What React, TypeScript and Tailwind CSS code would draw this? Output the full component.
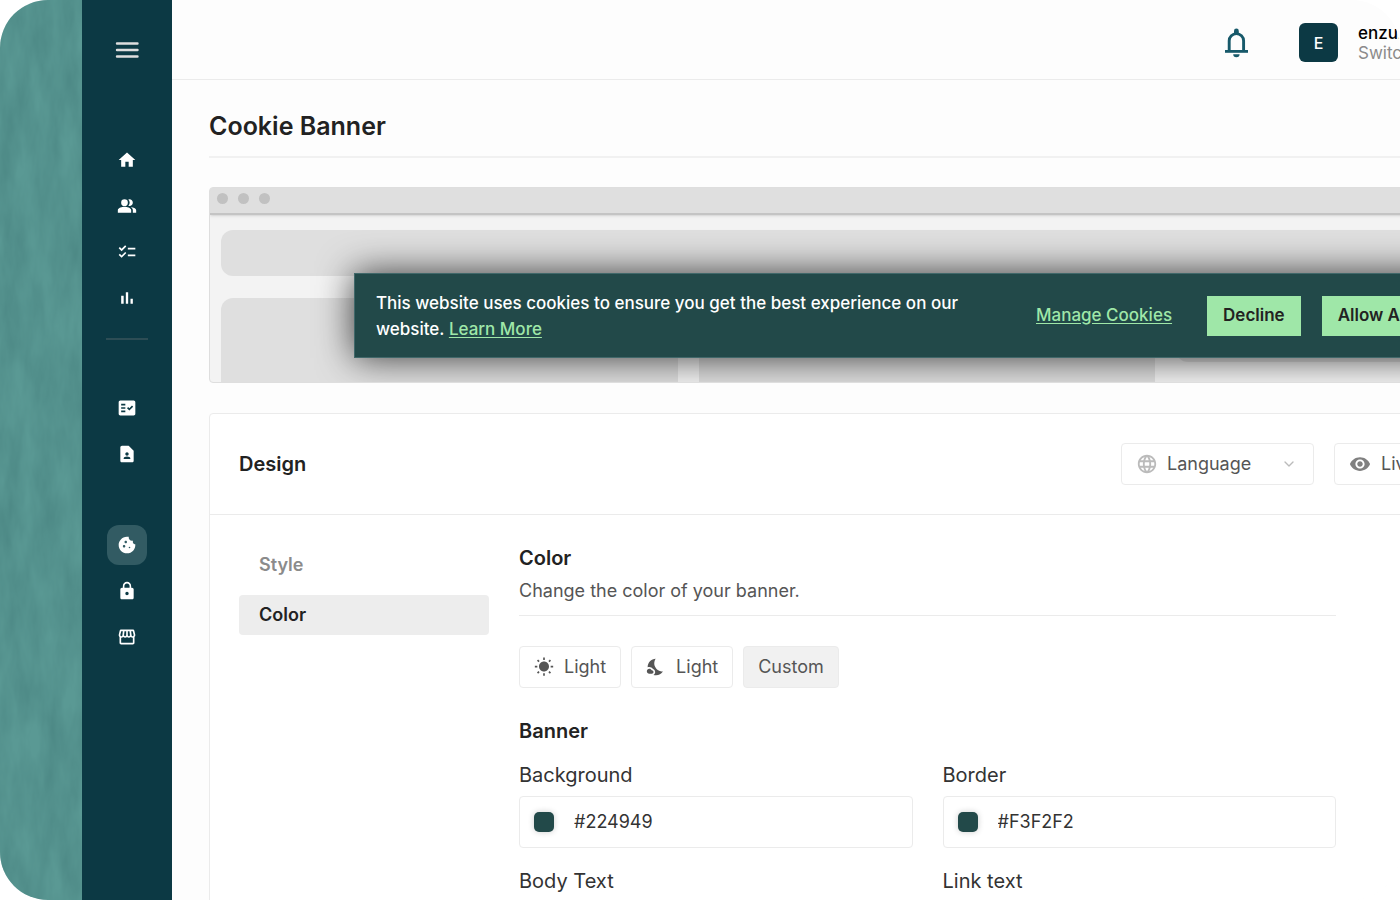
import type { ReactNode } from "react";
import {
  MdChecklist,
  MdContactPage,
  MdCookie,
  MdFactCheck,
  MdHome,
  MdLanguage,
  MdLock,
  MdNightsStay,
  MdPeopleAlt,
  MdStorefront,
  MdVisibility,
  MdWbSunny,
} from "react-icons/md";
import { ChevronDown } from "lucide-react";

function NavButton({ label, active, children }: { label: string; active?: boolean; children: ReactNode }) {
  return (
    <button
      type="button"
      aria-label={label}
      className={`flex size-10 items-center justify-center rounded-xl text-xl text-white ${
        active ? "bg-[#325b63]" : ""
      }`}
    >
      {children}
    </button>
  );
}

function BarsIcon() {
  return (
    <svg className="size-5" viewBox="0 0 24 24" fill="currentColor">
      <path d="M5 9.200h3V19H5zM10.600 5h2.800v14h-2.800zM16.200 13H19v6h-2.800z" />
    </svg>
  );
}

function Backdrop() {
  return (
    <div className="w-[82px] shrink-0 bg-[#5a9994]">
      <svg className="size-full" aria-hidden="true">
        <filter id="canvas" x="0" y="0" width="100%" height="100%" colorInterpolationFilters="sRGB">
          <feTurbulence type="fractalNoise" baseFrequency="0.05 0.014" numOctaves="4" seed="7" />
          <feColorMatrix values="0 0 0 0 0.28  0 0 0 0 0.51  0 0 0 0 0.5  1.2 0 0 0 -0.3" />
        </filter>
        <rect width="100%" height="100%" filter="url(#canvas)" />
      </svg>
    </div>
  );
}

function Sidebar() {
  return (
    <aside className="flex w-[90px] shrink-0 flex-col items-center bg-[#0c3944]">
      <button type="button" aria-label="Menu" className="mt-[30px] flex size-10 items-center justify-center">
        <svg width="24" height="18" viewBox="0 0 24 18" stroke="#dedede" strokeWidth="2.4" strokeLinecap="round">
          <path d="M2 2.5h20.500M2 9h20.500M2 15.500h20.500" />
        </svg>
      </button>
      <nav className="mt-[70px] flex flex-col items-center">
        <div className="flex flex-col gap-[6px]">
          <NavButton label="Home"><MdHome /></NavButton>
          <NavButton label="Users"><MdPeopleAlt /></NavButton>
          <NavButton label="Tasks"><MdChecklist /></NavButton>
          <NavButton label="Reports"><BarsIcon /></NavButton>
        </div>
        <hr className="mt-5 w-[42px] border-t-2 border-[#2d4d55]" />
        <div className="mt-12 flex flex-col gap-[6px]">
          <NavButton label="Policies"><MdFactCheck /></NavButton>
          <NavButton label="Requests"><MdContactPage /></NavButton>
        </div>
        <div className="mt-[51px] flex flex-col gap-[6px]">
          <NavButton label="Cookies" active><MdCookie /></NavButton>
          <NavButton label="Privacy"><MdLock /></NavButton>
          <NavButton label="Store"><MdStorefront /></NavButton>
        </div>
      </nav>
    </aside>
  );
}

function TopBar() {
  return (
    <header className="flex h-20 items-center justify-end border-b border-[#ebebeb] pt-[6px] pr-6">
      <button type="button" aria-label="Notifications" className="mr-[50px]">
        <svg width="25" height="32" viewBox="0 0 25 32" fill="none">
          <path d="M5.200 24V13.800a7.200 7.200 0 0 1 14.400 0V24" stroke="#17596a" strokeWidth="2.900" />
          <path d="M1 24.400h23" stroke="#17596a" strokeWidth="2.800" />
          <path d="M10 7V3.900a2.400 2.400 0 0 1 4.800 0V7zM9.200 27.200h6.400a3.200 3 0 0 1-6.400 0z" fill="#17596a" />
        </svg>
      </button>
      <button type="button" className="flex items-center gap-5 text-left">
        <span className="flex size-[39px] items-center justify-center rounded-md bg-[#0c3944] text-base font-medium text-white">
          E
        </span>
        <span className="w-[300px] text-[17px] leading-5">
          <span className="block font-medium text-black">enzuzo</span>
          <span className="block text-[#8b8b8b]">Switch Account</span>
        </span>
      </button>
    </header>
  );
}

function BannerPreview() {
  return (
    <section className="relative mt-[29px] h-[196px] overflow-hidden rounded border border-[#dedede] bg-[#f3f3f3]">
      <div className="flex h-[27px] items-center gap-[10px] border-b-2 border-[#c4c4c4] bg-[#dfdfdf] px-[7px] pb-1 shadow-sm">
        <span className="size-[11px] rounded-full bg-[#c1c1c1]" />
        <span className="size-[11px] rounded-full bg-[#c1c1c1]" />
        <span className="size-[11px] rounded-full bg-[#c1c1c1]" />
      </div>
      <div className="px-[11px] pt-[15px]">
        <div className="h-[46px] rounded-xl bg-[#dfdfdf]" />
        <div className="mt-[22px] grid grid-cols-3 gap-[21px]">
          <div className="h-24 rounded-t-xl bg-[#dfdfdf]" />
          <div className="h-24 rounded-t-xl bg-[#dfdfdf]" />
          <div className="h-16 rounded-xl bg-[#dfdfdf]" />
        </div>
      </div>

      <div className="absolute top-[85px] left-36 flex h-[85px] items-center border border-[#41686a] bg-[#224949] px-[21px] text-[17px] whitespace-nowrap shadow-[0_0_36px_rgba(0,0,0,0.75)]">
        <p className="w-[660px] leading-[26px] font-medium text-white">
          This website uses cookies to ensure you get the best experience on our
          <br />
          website.{" "}
          <a href="#learn" className="text-[#9fe7a8] underline underline-offset-2">
            Learn More
          </a>
        </p>
        <a href="#manage" className="mr-[35px] font-medium text-[#9fe7a8] underline underline-offset-2">
          Manage Cookies
        </a>
        <button type="button" className="mr-[21px] h-10 bg-[#9fe7a8] px-4 font-semibold text-[#222]">
          Decline
        </button>
        <button type="button" className="h-10 bg-[#9fe7a8] px-4 font-semibold text-[#222]">
          Allow All
        </button>
      </div>
    </section>
  );
}

function ColorField({ id, label, value }: { id: string; label: string; value: string }) {
  return (
    <div>
      <label htmlFor={id} className="block text-xl leading-7 text-[#333]">
        {label}
      </label>
      <div className="mt-[7px] flex h-[52px] items-center gap-5 rounded border border-[#ebebeb] bg-white px-[14px]">
        <span className="size-5 shrink-0 rounded-[5px] bg-[#224949] shadow-[0_0_6px_rgba(0,0,0,0.2)]" />
        <input
          id={id}
          defaultValue={value}
          className="min-w-0 flex-1 bg-transparent text-lg text-[#333] outline-none"
        />
      </div>
    </div>
  );
}

function ThemeButton({ children }: { children: ReactNode }) {
  return (
    <button
      type="button"
      className="flex h-[42px] items-center gap-[10px] rounded border border-[#ebebeb] bg-white px-[14px]"
    >
      {children}
    </button>
  );
}

function DesignPanel() {
  return (
    <section className="mt-[30px] rounded border border-[#ebebeb] bg-white">
      <div className="flex h-[101px] items-center border-b border-[#ebebeb] pr-5 pl-[29px]">
        <h2 className="text-xl font-semibold text-[#222]">Design</h2>
        <div className="ml-auto flex gap-5 text-lg text-[#555]">
          <div className="relative">
            <MdLanguage className="pointer-events-none absolute top-[10px] left-[15px] size-[22px] text-[#bbb]" />
            <select
              aria-label="Language"
              className="h-[42px] w-[193px] appearance-none rounded border border-[#ebebeb] bg-transparent pl-[45px]"
            >
              <option>Language</option>
            </select>
            <ChevronDown
              strokeWidth={2}
              className="pointer-events-none absolute top-[13px] right-[17px] size-4 text-[#bbb]"
            />
          </div>
          <button
            type="button"
            className="flex h-[42px] w-[290px] items-center gap-[10px] rounded border border-[#ebebeb] px-[14px]"
          >
            <MdVisibility className="size-[22px] text-[#808080]" />
            Live Preview
          </button>
        </div>
      </div>

      <div className="flex gap-[30px] pt-[30px] pr-[308px] pl-[29px]">
        <div className="flex w-[250px] shrink-0 flex-col gap-[10px] text-lg font-semibold">
          <button type="button" className="h-10 rounded px-5 text-left text-[#8b8b8b]">
            Style
          </button>
          <button type="button" className="h-10 rounded bg-[#ededed] px-5 text-left text-[#222]">
            Color
          </button>
        </div>

        <div className="flex-1">
          <div className="border-b border-[#ebebeb] pb-[10px]">
            <h3 className="text-xl leading-[26px] font-semibold text-[#222]">Color</h3>
            <p className="mt-[6px] text-lg leading-7 text-[#555]">Change the color of your banner.</p>
          </div>
          <div className="mt-[30px] flex gap-[10px] text-lg text-[#555]">
            <ThemeButton>
              <MdWbSunny className="size-5" />
              Light
            </ThemeButton>
            <ThemeButton>
              <MdNightsStay className="size-5" />
              Light
            </ThemeButton>
            <button type="button" className="h-[42px] rounded border border-[#ebebeb] bg-[#f1f1f1] px-[14px]">
              Custom
            </button>
          </div>
          <h3 className="mt-[30px] text-xl leading-[26px] font-semibold text-[#222]">Banner</h3>
          <div className="mt-[17px] grid grid-cols-2 gap-x-[30px] gap-y-[19px]">
            <ColorField id="background" label="Background" value="#224949" />
            <ColorField id="border" label="Border" value="#F3F2F2" />
            <ColorField id="body-text" label="Body Text" value="#FFFFFF" />
            <ColorField id="link-text" label="Link text" value="#9FE7A8" />
          </div>
        </div>
      </div>
    </section>
  );
}

export default function App() {
  return (
    <div className="h-screen overflow-hidden bg-white font-[Inter,sans-serif]">
      <div className="flex h-full overflow-hidden rounded-[48px]">
        <Backdrop />
        <Sidebar />
        <div className="min-w-0 flex-1 bg-[#fdfdfd]">
          {/* the page is wider than its frame and runs off the right edge */}
          <div className="-mr-[282px]">
            <TopBar />
            <main className="px-[37px] pt-[30px]">
              <h1 className="border-b-2 border-[#f1f1f1] pb-[14px] text-[25px] leading-8 font-semibold text-[#222]">
                Cookie Banner
              </h1>
              <BannerPreview />
              <DesignPanel />
            </main>
          </div>
        </div>
      </div>
    </div>
  );
}
